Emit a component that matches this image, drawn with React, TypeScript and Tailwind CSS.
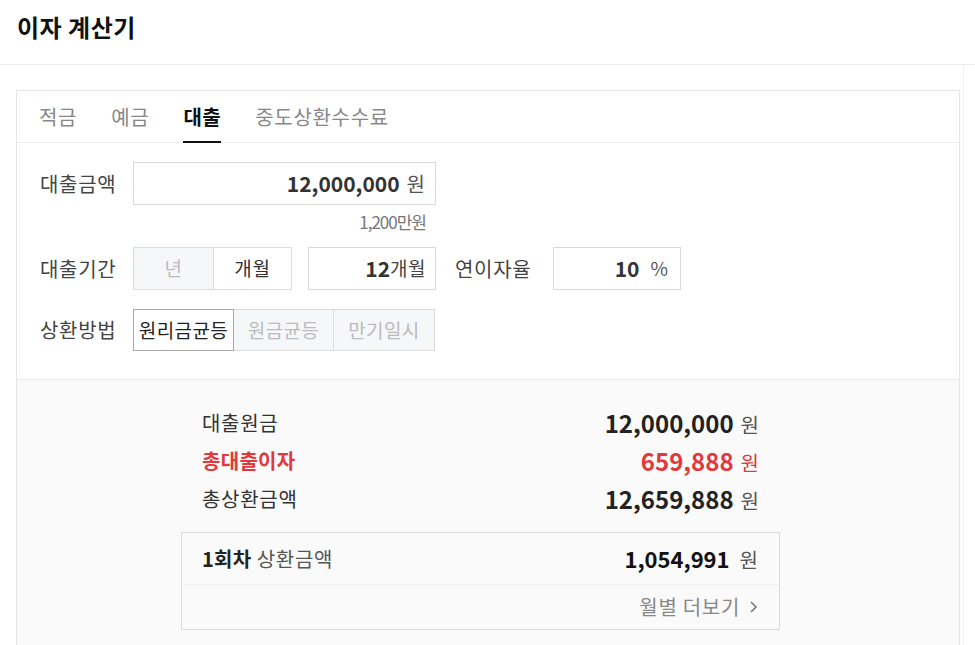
import React from 'react';

const tabs = ['적금', '예금', '대출', '중도상환수수료'];

function Won({ className = '' }: { className?: string }) {
  return <span className={'ml-[7px] text-[20px] font-normal text-[#555] ' + className}>원</span>;
}

export default function App() {
  return (
    <div className="min-h-[645px] bg-white font-['Noto_Sans_CJK_KR','Noto_Sans',sans-serif] text-[#333]">
      <header className="h-[65px] border-b border-[#ececec] px-[17px] pt-[10px]">
        <h1 className="text-[24px] font-bold leading-[34px] text-[#111] tracking-[0.5px]">이자 계산기</h1>
      </header>

      <main className="w-[964px] border-r border-[#f1f1f1] pt-[25px] pb-[20px]">
        <div className="ml-[16px] w-[944px] border border-[#e6e6e6]">
          {/* tabs */}
          <div className="flex h-[52px] gap-[34px] border-b border-[#ebebeb] pl-[22px]">
            {tabs.map((t) => (
              <div
                key={t}
                className={
                  t === '대출'
                    ? 'relative flex h-full items-center text-[20px] font-bold tracking-[0.5px] text-[#111]'
                    : 'relative flex h-full items-center text-[20px] tracking-[0.7px] text-[#888]'
                }
              >
                {t}
                {t === '대출' && <span className="absolute bottom-[-1px] left-0 h-[2px] w-full bg-[#111]" />}
              </div>
            ))}
          </div>

          {/* form */}
          <div className="border-b border-[#ebebeb] px-[23px] pt-[19px] pb-[28px] text-[20px] tracking-[0.7px]">
            <div className="flex h-[43px] items-center">
              <div className="w-[93px] text-[#444]">대출금액</div>
              <div className="flex h-[43px] w-[303px] items-center justify-end border border-[#d9d9d9] pr-[10px] tracking-normal">
                <span className="text-[21px] font-bold text-[#333]">12,000,000</span>
                <Won className="ml-[5px]" />
              </div>
            </div>
            <div className="ml-[93px] h-[42px] w-[303px] pr-[10px] pt-[6px] text-right text-[17px] leading-[22px] tracking-[-1px] text-[#777]">
              1,200만원
            </div>

            <div className="flex h-[43px] items-center">
              <div className="w-[93px] text-[#444]">대출기간</div>
              <div className="flex h-[43px] text-[19px]">
                <div className="flex w-[81px] items-center justify-center border border-[#dcdcdc] bg-[#f5f7f9] text-[#bbb]">년</div>
                <div className="flex w-[78px] items-center justify-center border-y border-r border-[#dcdcdc] text-[#333]">개월</div>
              </div>
              <div className="ml-[16px] flex h-[43px] w-[128px] items-center justify-end border border-[#d9d9d9] pr-[9px] tracking-normal">
                <span className="text-[21px] font-bold text-[#333]">12</span>
                <span className="text-[19px] tracking-[0.5px] text-[#444]">개월</span>
              </div>
              <div className="ml-[19px] w-[98px] text-[#444]">연이자율</div>
              <div className="flex h-[43px] w-[128px] items-center justify-end border border-[#d9d9d9] pr-[12px] tracking-normal">
                <span className="text-[21px] font-bold text-[#333]">10</span>
                <span className="ml-[11px] text-[19px] text-[#555]">%</span>
              </div>
            </div>

            <div className="mt-[19px] flex h-[42px] items-center">
              <div className="w-[93px] text-[#444]">상환방법</div>
              <div className="flex h-[42px] text-[19px] tracking-[0.4px]">
                <div className="flex w-[101px] items-center justify-center border border-[#a8a8a8] text-[#222]">원리금균등</div>
                <div className="flex w-[100px] items-center justify-center border-y border-r border-[#dcdcdc] bg-[#f5f7f9] text-[#bbb]">원금균등</div>
                <div className="flex w-[101px] items-center justify-center border-y border-r border-[#dcdcdc] bg-[#f5f7f9] text-[#bbb]">만기일시</div>
              </div>
            </div>
          </div>

          {/* results */}
          <div className="bg-[#fafafa] pt-[24px] pb-[24px] text-[20px] tracking-[0.7px]">
            <div className="ml-[164px] w-[599px] px-[21px]">
              <div className="flex h-[38px] items-center justify-between">
                <span className="text-[#333]">대출원금</span>
                <span className="flex items-baseline tracking-normal">
                  <span className="text-[24px] font-bold text-[#222]">12,000,000</span>
                  <Won />
                </span>
              </div>
              <div className="flex h-[38px] items-center justify-between">
                <span className="font-bold tracking-[0.3px] text-[#e0393e]">총대출이자</span>
                <span className="flex items-baseline tracking-normal">
                  <span className="text-[24px] font-bold text-[#e0393e]">659,888</span>
                  <Won className="font-bold !text-[#e0393e]" />
                </span>
              </div>
              <div className="flex h-[38px] items-center justify-between">
                <span className="text-[#333]">총상환금액</span>
                <span className="flex items-baseline tracking-normal">
                  <span className="text-[24px] font-bold text-[#222]">12,659,888</span>
                  <Won />
                </span>
              </div>
            </div>

            <div className="ml-[164px] mt-[14px] w-[599px] border border-[#dcdcdc] bg-[#fafafa]">
              <div className="flex h-[52px] items-center justify-between border-b border-[#efefef] px-[20px]">
                <span className="text-[#555]">
                  <span className="font-bold tracking-[0.3px] text-[#222]">1회차</span> 상환금액
                </span>
                <span className="flex items-baseline pr-[1px] tracking-normal">
                  <span className="text-[22px] font-bold text-[#111]">1,054,991</span>
                  <Won className="ml-[10px]" />
                </span>
              </div>
              <div className="flex h-[44px] items-center justify-end px-[21px] text-[#888]">
                월별 더보기
                <svg className="ml-[9px]" width="9" height="14" viewBox="0 0 9 14" fill="none">
                  <path d="M2 2l5 5-5 5" stroke="#777" strokeWidth="1.6" />
                </svg>
              </div>
            </div>
          </div>
        </div>
      </main>
    </div>
  );
}
